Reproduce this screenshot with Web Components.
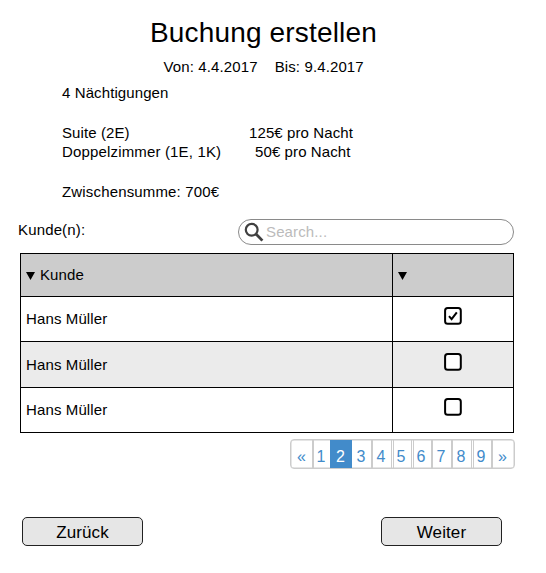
<!DOCTYPE html>
<html lang="de">
<head>
<meta charset="utf-8">
<title>Buchung erstellen</title>
<style>
body{margin:0;background:#fff;color:#000;font:15px/20px "Liberation Sans",Arial,sans-serif}
</style>
</head>
<body>
<booking-page></booking-page>
<script>
const define = (name, html) => customElements.define(name, class extends HTMLElement {
  constructor() {
    super();
    const t = document.createElement('template');
    t.innerHTML = html;
    this.attachShadow({mode: 'open'}).append(t.content.cloneNode(true));
  }
});

define('booking-header', `
<style>
:host{display:block}
h1{margin:0;padding:17px 0 0 150px;font-size:28px;line-height:32px;font-weight:400;letter-spacing:.16px;white-space:nowrap}
.dates{display:flex;gap:17px;padding:8px 0 0 163.5px;line-height:20px;letter-spacing:.12px;white-space:nowrap}
</style>
<h1><slot name="title"></slot></h1>
<div class="dates"><slot></slot></div>`);

define('booking-summary', `
<style>
:host{display:grid;grid-template-columns:187px 1fr;grid-template-rows:20px 20px 19px 20px 20px 20px;padding:6px 0 0 62px;white-space:nowrap;letter-spacing:.1px}
.price2{padding-left:6px}
.a{grid-row:1}.b{grid-row:3}.c{grid-row:4}.d{grid-row:6}
.wide{letter-spacing:.16px}
</style>
<span class="a">4 Nächtigungen</span>
<span class="b">Suite (2E)</span><span class="b">125€ pro Nacht</span>
<span class="c wide">Doppelzimmer (1E, 1K)</span><span class="c price2">50€ pro Nacht</span>
<span class="d wide">Zwischensumme: 700€</span>`);

define('search-field', `
<style>
:host{display:flex;box-sizing:border-box;width:276px;height:26px;border:1px solid #8a8a8a;border-radius:13px;background:#fff;align-items:center;padding-left:5px}
svg{display:block;flex:none}
span{color:#bbb;font-size:15px;line-height:20px;padding-left:2px;letter-spacing:.13px}
</style>
<svg width="20" height="20" viewBox="0 0 20 20" fill="none" stroke="#404040"><circle cx="7.7" cy="7.8" r="5.9" stroke-width="2.2"/><path d="M12 12l6.4 6.6" stroke-width="2.8"/></svg>
<span><slot></slot></span>`);

define('check-box', `
<style>
:host{display:block;width:18px;height:18px}
svg{display:block}
path{display:none}
:host([checked]) path{display:block}
</style>
<svg width="18" height="18" viewBox="0 0 18 18" fill="none" stroke="#000" stroke-width="2"><rect x="1.1" y="1.1" width="15.7" height="15.7" rx="2.6" fill="#fff"/><path d="M5 9.2l2.6 3 5.2-6.9"/></svg>`);

define('customer-row', `
<style>
:host{display:grid;grid-template-columns:372px 1fr;box-sizing:border-box;border-bottom:1px solid #000;background:var(--row-bg,#fff)}
.name,.pick{display:flex;align-items:center}
.name{border-right:1px solid #000;padding-left:5px;letter-spacing:.12px}
.pick{justify-content:center;align-items:flex-start;padding-top:var(--pick-top,10px)}
</style>
<div class="name"><slot></slot></div><div class="pick"><slot name="pick"></slot></div>`);

define('customer-table', `
<style>
:host{display:block;box-sizing:border-box;width:494px;border:1px solid #000;border-bottom:0}
.head{display:grid;grid-template-columns:371px 1fr;height:42px;background:#ccc;border-bottom:1px solid #000}
.head div{display:flex;align-items:center;padding-left:5px;gap:5px;letter-spacing:.1px}
.head div+div{border-left:1px solid #000}
svg{margin-top:2px}
</style>
<div class="head">
<div><svg width="9" height="8" viewBox="0 0 9 8"><path d="M0 0h9L4.5 8z"/></svg><span>Kunde</span></div>
<div><svg width="9" height="8" viewBox="0 0 9 8"><path d="M0 0h9L4.5 8z"/></svg></div>
</div>
<slot></slot>`);

define('page-item', `
<style>
:host{display:flex;box-sizing:border-box;height:28px;justify-content:center;align-items:center;padding:6px 2px 0 0;color:#428bca;border-left:2px solid #ccc;font-size:16px}
:host([first]){border-left:0;padding-right:0}
:host([double]){border-left:3px double #ccc;padding-right:3px}
:host([active]){background:#428bca;color:#fff;border-color:#428bca;padding-right:3px}
:host([after]){border-left:0;padding-right:1px}
</style><slot></slot>`);

define('page-nav', `
<style>
:host{display:grid;box-sizing:border-box;width:225px;height:30px;grid-template-columns:21px 18px 22px 19px 20px 20px 20px 20px 20px 20px 23px;border:1px solid #ccc;border-radius:4px;overflow:hidden;box-shadow:inset 0 0 0 .5px #ccc}
</style><slot></slot>`);

define('action-button', `
<style>
:host{display:block;width:121px;height:29px}
button{display:block;box-sizing:border-box;width:100%;height:100%;padding:2px 0 0;border:1.3px solid #222;border-radius:5px;background:#e6e6e6;color:#000;font:17px/20px "Liberation Sans",Arial,sans-serif;letter-spacing:.1px}
</style><button><slot></slot></button>`);

define('booking-page', `
<style>
:host{display:block;width:546px;height:573px;overflow:hidden;background:#fff}
.filter{display:flex;justify-content:space-between;align-items:flex-start;padding:17px 32px 0 18px}
.filter span{padding-top:1px;letter-spacing:.15px}
customer-table{margin:8px 0 0 20px}
.r1{height:45px}.r2{height:46px}.r3{height:45px}
page-nav{margin:6px 0 0 290px}
.actions{display:flex;gap:238px;padding:48px 0 0 22px}
</style>
<booking-header><span slot="title">Buchung erstellen</span><span>Von: 4.4.2017</span><span>Bis: 9.4.2017</span></booking-header>
<booking-summary></booking-summary>
<div class="filter"><span>Kunde(n):</span><search-field>Search...</search-field></div>
<customer-table>
<customer-row class="r1">Hans Müller<check-box slot="pick" checked></check-box></customer-row>
<customer-row class="r2" style="--row-bg:#ebebeb;--pick-top:11px">Hans Müller<check-box slot="pick"></check-box></customer-row>
<customer-row class="r3">Hans Müller<check-box slot="pick"></check-box></customer-row>
</customer-table>
<page-nav><page-item first>«</page-item><page-item>1</page-item><page-item active>2</page-item><page-item after>3</page-item><page-item>4</page-item><page-item double>5</page-item><page-item double>6</page-item><page-item>7</page-item><page-item>8</page-item><page-item double>9</page-item><page-item>»</page-item></page-nav>
<div class="actions"><action-button>Zurück</action-button><action-button>Weiter</action-button></div>`);
</script>
</body>
</html>
